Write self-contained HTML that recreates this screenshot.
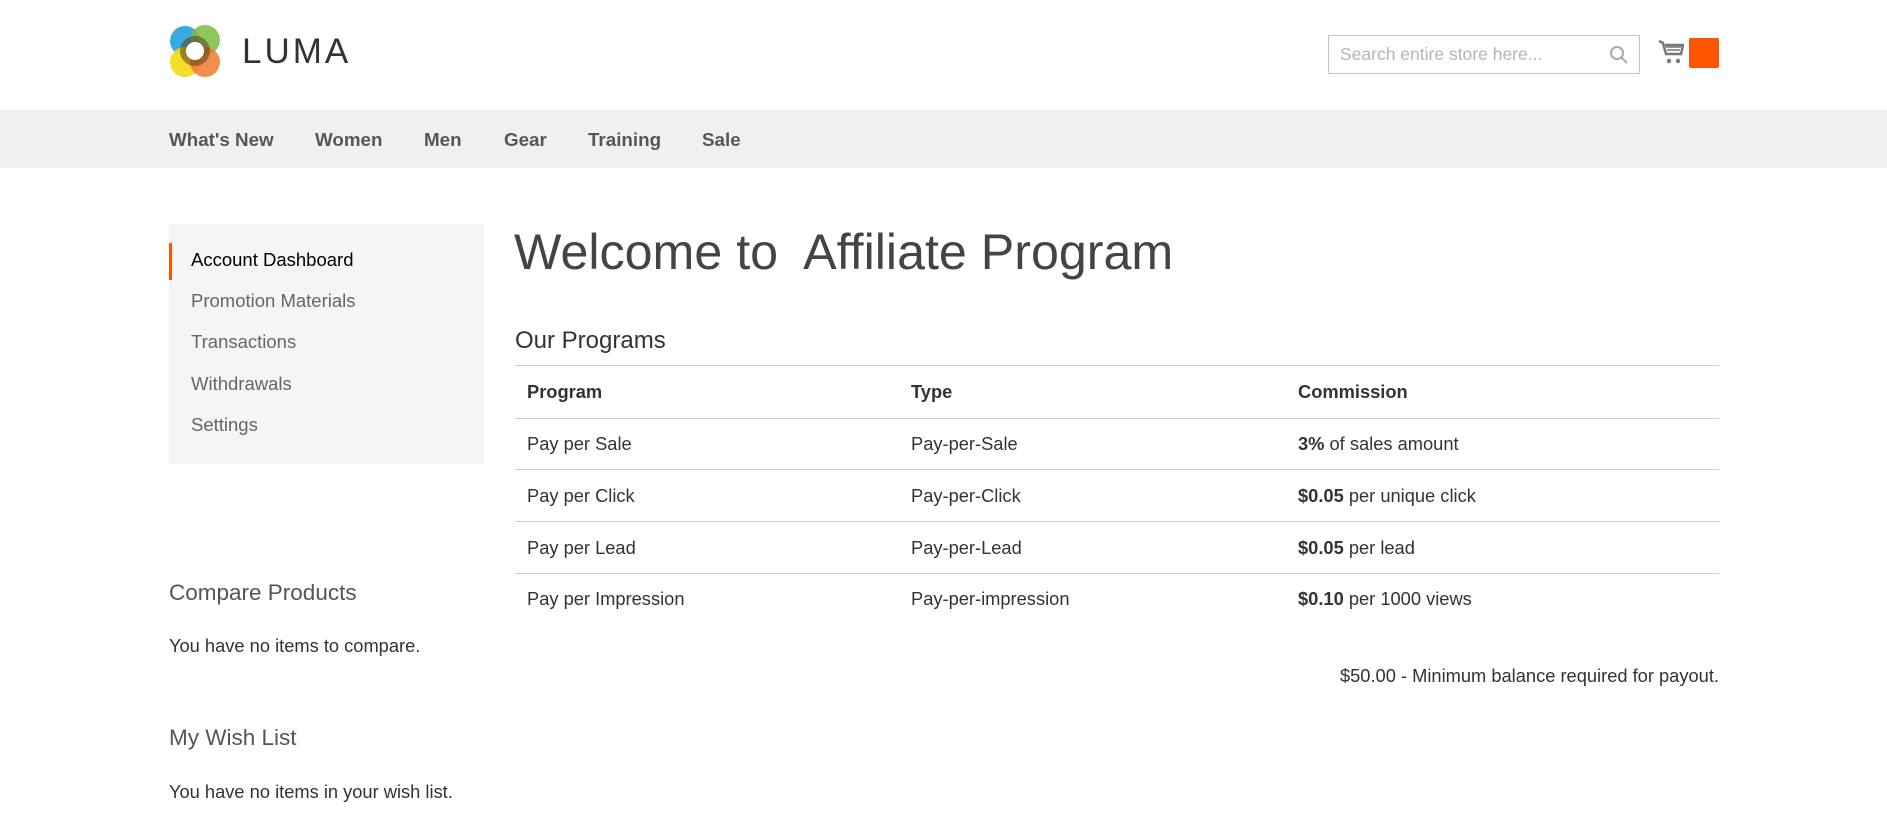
<!DOCTYPE html>
<html><head><meta charset="utf-8"><style>
*{margin:0;padding:0;box-sizing:border-box}
body{width:1887px;height:825px;background:#fff;font-family:"Liberation Sans",sans-serif;color:#333;font-size:18.5px;position:relative;overflow:hidden}
.a{position:absolute;white-space:nowrap}
.nav{position:absolute;left:0;top:110px;width:1887px;height:58px;background:#f0f0f0}
.nav span{position:absolute;top:19px;font-weight:bold;font-size:18.8px;color:#575757}
.side{position:absolute;left:169px;top:224px;width:315px;height:240px;background:#f5f5f5}
.side div{position:absolute;left:22px;font-size:18.5px;color:#666}
.row{position:absolute;left:515px;width:1204px;border-top:1px solid #ccc}
.c{position:absolute;font-size:18.3px;color:#333}
</style></head><body>
<svg class="a" style="left:169px;top:24px" width="58" height="56" viewBox="0 0 58 56">
<g style="mix-blend-mode:multiply">
<circle cx="16" cy="17" r="15" fill="#1fa3dc" opacity=".9"/>
<circle cx="36" cy="16" r="15" fill="#7cbc3f" opacity=".85"/>
<circle cx="16" cy="38" r="15" fill="#f6d912" opacity=".9"/>
<circle cx="36" cy="38" r="15" fill="#f07b2f" opacity=".85"/>
<circle cx="26" cy="27" r="15" fill="#5a3e1e" opacity=".55"/>
</g>
<circle cx="26" cy="27" r="9" fill="#fff"/>
</svg>
<div class="a" style="left:242px;top:32px;font-size:35px;letter-spacing:3px;color:#333">LUMA</div>
<div class="a" style="left:1328px;top:35px;width:312px;height:39px;border:1px solid #c2c2c2;border-radius:1px"></div>
<div class="a" style="left:1340px;top:44px;font-size:17.5px;color:#b5b5b5">Search entire store here...</div>
<svg class="a" style="left:1609px;top:45px" width="20" height="20" viewBox="0 0 20 20"><circle cx="8" cy="8" r="6" fill="none" stroke="#aaa" stroke-width="2"/><line x1="12.5" y1="12.5" x2="18" y2="18" stroke="#aaa" stroke-width="2"/></svg>
<svg class="a" style="left:1658px;top:39px" width="26" height="26" viewBox="0 0 26 26"><path d="M1 2l4 2 3 11h15l2-9H7" fill="none" stroke="#777" stroke-width="2.5"/><path d="M8 8h15M9 11h13" stroke="#777" stroke-width="1.5"/><circle cx="11" cy="22" r="2.2" fill="#777"/><circle cx="20" cy="22" r="2.2" fill="#777"/></svg>
<div class="a" style="left:1689px;top:38px;width:30px;height:30px;background:#ff5501;border-radius:2px"></div>
<div class="nav"><span style="left:169px">What's New</span><span style="left:315px">Women</span><span style="left:424px">Men</span><span style="left:504px">Gear</span><span style="left:588px">Training</span><span style="left:702px">Sale</span></div>
<div class="side">
<div style="left:0;top:19px;width:3px;height:37px;background:#ff5501"></div>
<div style="top:25px;color:#000">Account Dashboard</div>
<div style="top:66px">Promotion Materials</div>
<div style="top:107px">Transactions</div>
<div style="top:149px">Withdrawals</div>
<div style="top:190px">Settings</div>
</div>
<div class="a" style="left:514px;top:223px;font-size:50.2px;color:#444">Welcome to&nbsp; Affiliate Program</div>
<div class="a" style="left:515px;top:327px;font-size:24px;color:#333">Our Programs</div>
<div class="row" style="top:365px"></div>
<div class="c" style="left:527px;top:381px;font-weight:bold">Program</div>
<div class="c" style="left:911px;top:381px;font-weight:bold">Type</div>
<div class="c" style="left:1298px;top:381px;font-weight:bold">Commission</div>
<div class="row" style="top:418px"></div>
<div class="c" style="left:527px;top:433px">Pay per Sale</div>
<div class="c" style="left:911px;top:433px">Pay-per-Sale</div>
<div class="c" style="left:1298px;top:433px"><b>3%</b> of sales amount</div>
<div class="row" style="top:469px"></div>
<div class="c" style="left:527px;top:485px">Pay per Click</div>
<div class="c" style="left:911px;top:485px">Pay-per-Click</div>
<div class="c" style="left:1298px;top:485px"><b>$0.05</b> per unique click</div>
<div class="row" style="top:521px"></div>
<div class="c" style="left:527px;top:537px">Pay per Lead</div>
<div class="c" style="left:911px;top:537px">Pay-per-Lead</div>
<div class="c" style="left:1298px;top:537px"><b>$0.05</b> per lead</div>
<div class="row" style="top:573px"></div>
<div class="c" style="left:527px;top:588px">Pay per Impression</div>
<div class="c" style="left:911px;top:588px">Pay-per-impression</div>
<div class="c" style="left:1298px;top:588px"><b>$0.10</b> per 1000 views</div>
<div class="a" style="right:168px;top:665px;font-size:18.3px">$50.00 - Minimum balance required for payout.</div>
<div class="a" style="left:169px;top:580px;font-size:22.5px;color:#555">Compare Products</div>
<div class="a" style="left:169px;top:635px;font-size:18.3px">You have no items to compare.</div>
<div class="a" style="left:169px;top:725px;font-size:22.5px;color:#555">My Wish List</div>
<div class="a" style="left:169px;top:781px;font-size:18.3px">You have no items in your wish list.</div>
</body></html>
